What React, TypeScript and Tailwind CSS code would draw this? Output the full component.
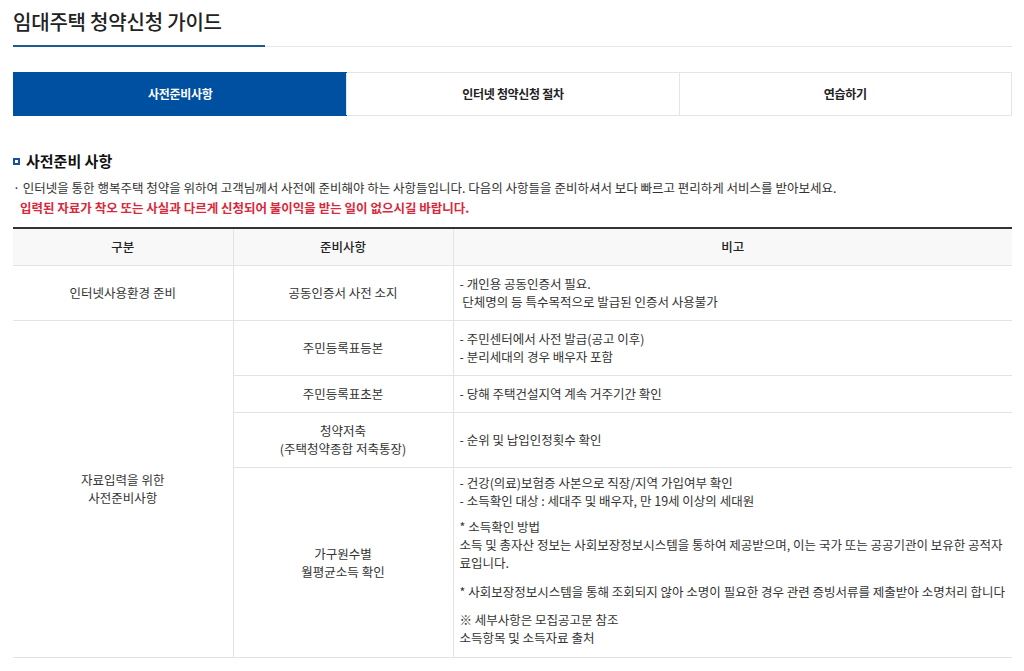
import React from "react";

const tabs = ["사전준비사항", "인터넷 청약신청 절차", "연습하기"];

export default function App() {
  const td = "border-b border-[#e3e3e3] py-[9px] text-[12.5px] leading-[18px] align-middle";

  return (
    <div className="min-h-screen bg-white text-[#333] font-['Noto_Sans_CJK_KR','Noto_Sans',sans-serif] pl-[13px] pr-[12px]">
      {/* title */}
      <div className="flex border-b border-[#e6e6e6] pt-[9px]">
        <h1 className="w-[252px] -mb-px border-b-2 border-[#1d5a8f] pb-[10px] text-[20px] leading-[26px] font-medium text-[#222] tracking-[-0.2px]">
          임대주택 청약신청 가이드
        </h1>
      </div>

      {/* tabs */}
      <div className="mt-[25px] grid grid-cols-3 border border-[#e5e5e5] h-[44px]">
        {tabs.map((t, i) => (
          <div
            key={t}
            className={`flex items-center justify-center text-[12px] font-bold tracking-[-0.3px] ${
              i === 0
                ? "bg-[#0050a1] text-white -m-px"
                : "bg-white text-[#222] border-l border-[#e5e5e5]"
            }`}
          >
            {t}
          </div>
        ))}
      </div>

      {/* section */}
      <div className="mt-[35px] flex items-center gap-[6px]">
        <span className="w-[7px] h-[7px] border-2 border-[#1a4fa0] bg-white" />
        <h2 className="text-[15px] leading-[20px] font-bold text-[#111]">사전준비 사항</h2>
      </div>
      <p className="mt-[7px] text-[12.5px] leading-[20px] text-[#333]">
        · 인터넷을 통한 행복주택 청약을 위하여 고객님께서 사전에 준비해야 하는 사항들입니다. 다음의 사항들을 준비하셔서 보다 빠르고 편리하게 서비스를 받아보세요.
      </p>
      <p className="pl-[7px] text-[12.5px] leading-[20px] font-bold text-[#d8283a]">
        입력된 자료가 착오 또는 사실과 다르게 신청되어 불이익을 받는 일이 없으시길 바랍니다.
      </p>

      {/* table */}
      <table className="mt-[9px] w-full table-fixed border-collapse">
        <colgroup>
          <col className="w-[220px]" />
          <col className="w-[220px]" />
          <col />
        </colgroup>
        <thead>
          <tr className="bg-[#f8f8f8]">
            <th className={`${td} border-t-2 border-t-[#333] font-medium text-[#222]`}>구분</th>
            <th className={`${td} border-t-2 border-t-[#333] border-l border-l-[#e3e3e3] font-medium text-[#222]`}>준비사항</th>
            <th className={`${td} border-t-2 border-t-[#333] border-l border-l-[#e3e3e3] font-medium text-[#222]`}>비고</th>
          </tr>
        </thead>
        <tbody>
          <tr>
            <td className={`${td} text-center`}>인터넷사용환경 준비</td>
            <td className={`${td} text-center border-l border-l-[#e3e3e3]`}>공동인증서 사전 소지</td>
            <td className={`${td} border-l border-l-[#e3e3e3] pl-[6px] pr-[8px]`}>
              - 개인용 공동인증서 필요.
              <br />
              &nbsp;단체명의 등 특수목적으로 발급된 인증서 사용불가
            </td>
          </tr>
          <tr>
            <td rowSpan={4} className={`${td} text-center`}>
              자료입력을 위한
              <br />
              사전준비사항
            </td>
            <td className={`${td} text-center border-l border-l-[#e3e3e3]`}>주민등록표등본</td>
            <td className={`${td} border-l border-l-[#e3e3e3] pl-[6px] pr-[8px]`}>
              - 주민센터에서 사전 발급(공고 이후)
              <br />- 분리세대의 경우 배우자 포함
            </td>
          </tr>
          <tr>
            <td className={`${td} text-center border-l border-l-[#e3e3e3] py-[8px]`}>주민등록표초본</td>
            <td className={`${td} border-l border-l-[#e3e3e3] pl-[6px] pr-[8px] py-[8px]`}>
              - 당해 주택건설지역 계속 거주기간 확인
            </td>
          </tr>
          <tr>
            <td className={`${td} text-center border-l border-l-[#e3e3e3] py-[8.5px]`}>
              청약저축
              <br />
              (주택청약종합 저축통장)
            </td>
            <td className={`${td} border-l border-l-[#e3e3e3] pl-[6px] pr-[8px] py-[8.5px]`}>- 순위 및 납입인정횟수 확인</td>
          </tr>
          <tr>
            <td className={`${td} text-center border-l border-l-[#e3e3e3]`}>
              가구원수별
              <br />
              월평균소득 확인
            </td>
            <td className={`${td} border-l border-l-[#e3e3e3] pl-[6px] pr-[8px] pt-[6px] pb-[10px] leading-[18.5px]`}>
              <p>
                - 건강(의료)보험증 사본으로 직장/지역 가입여부 확인
                <br />- 소득확인 대상 : 세대주 및 배우자, 만 19세 이상의 세대원
              </p>
              <p className="mt-[8px]">
                * 소득확인 방법
                <br />
                소득 및 총자산 정보는 사회보장정보시스템을 통하여 제공받으며, 이는 국가 또는 공공기관이 보유한 공적자
                <br />
                료입니다.
              </p>
              <p className="mt-[11px] whitespace-nowrap">
                * 사회보장정보시스템을 통해 조회되지 않아 소명이 필요한 경우 관련 증빙서류를 제출받아 소명처리 합니다
              </p>
              <p className="mt-[10px]">
                ※ 세부사항은 모집공고문 참조
                <br />
                소득항목 및 소득자료 출처
              </p>
            </td>
          </tr>
        </tbody>
      </table>
    </div>
  );
}
